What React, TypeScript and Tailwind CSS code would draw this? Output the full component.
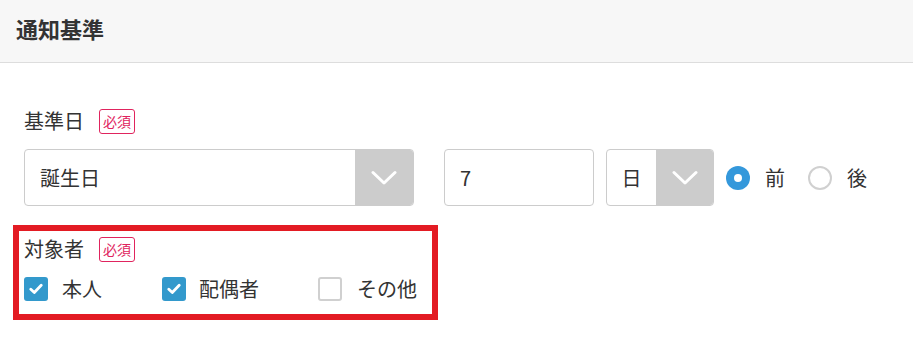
import React from 'react';

const font = { fontFamily: '"Noto Sans CJK JP", "Noto Sans", sans-serif' };

function Badge() {
  return (
    <span className="ml-[15px] inline-flex h-[25px] w-[36px] items-center justify-center rounded-[3px] border border-[#e0245e] text-[14px] leading-none text-[#e0245e]">
      必須
    </span>
  );
}

function Chevron() {
  return (
    <svg width="26" height="16" viewBox="0 0 26 16" fill="none">
      <path d="M2 2.5 L13 13 L24 2.5" stroke="#fff" strokeWidth="3" strokeLinecap="round" strokeLinejoin="round" />
    </svg>
  );
}

function Check({ checked }: { checked: boolean }) {
  if (!checked) {
    return <span className="h-[24px] w-[24px] shrink-0 rounded-[3px] border-2 border-[#d0d0d0] bg-white" />;
  }
  return (
    <span className="flex h-[24px] w-[24px] shrink-0 items-center justify-center rounded-[3px] bg-[#3399cc]">
      <svg width="14" height="12" viewBox="0 0 14 12" fill="none">
        <path d="M1.8 6.2 L5.3 9.5 L12.2 2.3" stroke="#fff" strokeWidth="2.8" strokeLinecap="round" strokeLinejoin="round" />
      </svg>
    </span>
  );
}

function Radio({ checked }: { checked: boolean }) {
  return checked ? (
    <span className="flex h-[24px] w-[24px] shrink-0 items-center justify-center rounded-full bg-[#3498db]">
      <span className="h-[8px] w-[8px] rounded-full bg-white" />
    </span>
  ) : (
    <span className="h-[24px] w-[24px] shrink-0 rounded-full border-2 border-[#d0d0d0] bg-white" />
  );
}

export default function App() {
  return (
    <div className="h-[337px] w-[913px] bg-white text-[#333]" style={font}>
      <header className="flex h-[63px] items-center border-b border-[#dddddd] bg-[#f7f7f7] pb-[6px] pl-[16px]">
        <h1 className="text-[22px] font-bold text-[#333]">通知基準</h1>
      </header>

      <div className="pl-[24px] pt-[45px]">
        <div className="flex h-[26px] items-center">
          <span className="text-[20px] leading-none">基準日</span>
          <Badge />
        </div>

        <div className="mt-[15px] flex h-[57px] items-center">
          <div className="flex h-full w-[390px] overflow-hidden rounded-[4px] border border-[#cccccc]">
            <div className="flex flex-1 items-center pl-[15px] text-[20px]">誕生日</div>
            <div className="flex w-[58px] items-center justify-center bg-[#cccccc]">
              <Chevron />
            </div>
          </div>

          <div className="ml-[30px] flex h-full w-[150px] items-center rounded-[4px] border border-[#cccccc] pl-[15px] text-[20px]">
            7
          </div>

          <div className="ml-[12px] flex h-full w-[108px] overflow-hidden rounded-[4px] border border-[#cccccc]">
            <div className="flex w-[49px] items-center justify-center text-[20px]">日</div>
            <div className="flex flex-1 items-center justify-center bg-[#cccccc]">
              <Chevron />
            </div>
          </div>

          <div className="ml-[12px] flex items-center">
            <Radio checked />
            <span className="ml-[15px] text-[20px]">前</span>
          </div>
          <div className="ml-[23px] flex items-center">
            <Radio checked={false} />
            <span className="ml-[15px] text-[20px]">後</span>
          </div>
        </div>
      </div>

      <div className="ml-[13px] mt-[19px] h-[95px] w-[425px] border-[6px] border-[#e31b23] pl-[5px] pt-[5px]">
        <div className="flex h-[26px] items-center">
          <span className="text-[20px] leading-none">対象者</span>
          <Badge />
        </div>
        <div className="mt-[15px] flex h-[24px] items-center">
          <div className="flex w-[138px] items-center">
            <Check checked />
            <span className="ml-[14px] text-[20px]">本人</span>
          </div>
          <div className="flex w-[156px] items-center">
            <Check checked />
            <span className="ml-[13px] text-[20px]">配偶者</span>
          </div>
          <div className="flex items-center">
            <Check checked={false} />
            <span className="ml-[15px] text-[20px]">その他</span>
          </div>
        </div>
      </div>
    </div>
  );
}
